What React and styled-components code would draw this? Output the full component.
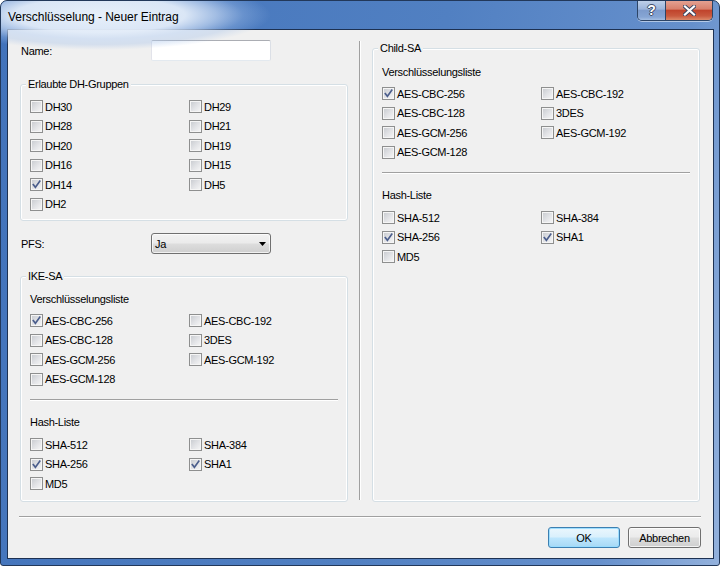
import React from 'react';
import styled, { createGlobalStyle } from 'styled-components';

const Global = createGlobalStyle`
  html, body { margin: 0; padding: 0; background: #ffffff; }
  body {
    width: 720px; height: 566px; overflow: hidden;
    font-family: "Liberation Sans", Arial, sans-serif;
  }
  * { box-sizing: border-box; }
`;

const Window = styled.div`
  width: 720px;
  height: 566px;
  display: flex;
  flex-direction: column;
  border: 1px solid #22385a;
  border-radius: 7px 7px 3px 3px;
  background: linear-gradient(100deg, #4273bb 0%, #5180c2 55%, #6690cc 85%, #93b1dc 100%);
  padding: 0 5px 6px 6px;
  overflow: hidden;
`;

const TitleBar = styled.div`
  height: 28px;
  flex: none;
  display: flex;
  align-items: flex-start;
  justify-content: space-between;
`;

const Title = styled.span`
  position: relative;
  isolation: isolate;
  margin: 9px 0 0 1px;
  font-size: 12px;
  line-height: 14px;
  color: #000;
  letter-spacing: -0.05px;
  &::before {
    content: "";
    position: absolute;
    z-index: -1;
    left: -80px; right: -130px; top: -30px; bottom: -26px;
    background: radial-gradient(closest-side ellipse at 45% 50%,
      rgba(234,242,251,0.98) 0%, rgba(226,236,249,0.95) 50%,
      rgba(200,218,243,0.7) 68%, rgba(160,190,232,0.35) 84%, rgba(140,175,225,0) 100%);
  }
`;

const CaptionButtons = styled.div`
  display: flex;
  margin-right: 1px;
  margin-top: -1px;
  border: 1px solid #2c4466;
  border-top: none;
  border-radius: 0 0 5px 5px;
  overflow: hidden;
  box-shadow: 0 1px 0 rgba(255,255,255,0.5);
`;

const CaptionButton = styled.div`
  width: ${p => p.$w}px;
  height: 20px;
  display: flex;
  align-items: center;
  justify-content: center;
  background: ${p => p.$close
    ? 'linear-gradient(180deg, #e5a596 0%, #d8806c 45%, #c0442c 52%, #c95a3f 80%, #dc8a6a 100%)'
    : 'linear-gradient(180deg, #c2d3ea 0%, #9cb5dc 45%, #7d9bcc 52%, #86a5d4 85%, #a5bfe3 100%)'};
  & + & { border-left: 1px solid #2c4466; }
  font-family: "Liberation Sans", Arial, sans-serif;
  font-weight: bold;
  font-size: 14px;
  color: #fff;
  text-shadow: 0 0 1px #2a3550, 1px 0 0 #45526e, -1px 0 0 #45526e, 0 1px 0 #45526e, 0 -1px 0 #45526e;
`;

const Client = styled.div`
  flex: 1;
  display: flex;
  flex-direction: column;
  border: 1px solid #1d3152;
  background: #f0f0f0;
  padding: 10px 12px 9px 12px;
  font-size: 11px;
  letter-spacing: -0.3px;
  color: #000;
`;

const Main = styled.div`
  display: grid;
  grid-template-columns: 328px 24px 328px;
  height: 462px;
`;

const Column = styled.div`
  display: flex;
  flex-direction: column;
  padding-top: ${p => p.$top || 0}px;
`;

const VSeparator = styled.div`
  width: 2px;
  margin: 1px 0 2px 11px;
  border-left: 1px solid #a0a0a0;
  border-right: 1px solid #ffffff;
`;

const FieldRow = styled.div`
  display: flex;
  align-items: center;
  height: ${p => p.$h}px;
  margin-top: ${p => p.$mt || 0}px;
`;

const FieldLabel = styled.span`
  width: 131px;
  padding-left: 1px;
`;

const TextInput = styled.div`
  width: 120px;
  height: 21px;
  background: #fff;
  border: 1px solid #e3e9ef;
  border-top-color: #abadb3;
  border-left-color: #e2e3ea;
  border-right-color: #dbdfe6;
  border-radius: 2px;
`;

const Select = styled.div`
  width: 120px;
  height: 21px;
  display: flex;
  align-items: center;
  justify-content: space-between;
  padding: 0 4px 0 3px;
  border: 1px solid #707070;
  border-radius: 3px;
  background: linear-gradient(180deg, #f2f2f2 0%, #ebebeb 48%, #dddddd 52%, #cfcfcf 100%);
  box-shadow: inset 0 0 0 1px rgba(255,255,255,0.7);
`;

const Group = styled.fieldset`
  margin: ${p => p.$mt || 0}px 0 0 0;
  padding: 0;
  min-width: 0;
  border: 1px solid #d5dfe5;
  border-radius: 3px;
  box-shadow: inset 0 0 0 1px #ffffff;
  flex: ${p => (p.$grow ? 1 : 'none')};
`;

const Legend = styled.legend`
  margin-left: 5px;
  padding: 0 2px;
  line-height: 14px;
  background: #f0f0f0;
`;

const GroupBody = styled.div`
  padding: ${p => p.$pt}px 9px ${p => p.$pb}px 9px;
  display: flex;
  flex-direction: column;
`;

const SubHeading = styled.div`
  line-height: 14px;
  height: 14px;
  margin-bottom: ${p => p.$mb || 5}px;
`;

const CheckGrid = styled.div`
  display: grid;
  grid-template-columns: 159px 1fr;
  grid-auto-rows: 19.5px;
`;

const CheckItem = styled.label`
  display: flex;
  align-items: center;
  gap: 2px;
  white-space: nowrap;
`;

const Box = styled.span`
  width: 13px;
  height: 13px;
  flex: none;
  display: flex;
  align-items: center;
  justify-content: center;
  border: 1px solid #8e8f8f;
  background: linear-gradient(135deg, #c6c9ce 0%, #e3e4e7 55%, #f7f7f7 100%);
  box-shadow: inset 0 0 0 1px #f5f5f5;
`;

const Divider = styled.div`
  height: 2px;
  margin: 10px 0 14px 0;
  border-top: 1px solid #a0a0a0;
  border-bottom: 1px solid #ffffff;
`;

const HSeparator = styled.div`
  height: 2px;
  margin: 14px 0 9px -1px;
  border-top: 1px solid #a0a0a0;
  border-bottom: 1px solid #ffffff;
`;

const ButtonRow = styled.div`
  display: flex;
  justify-content: flex-end;
  gap: 8px;
`;

const Button = styled.div`
  width: ${p => p.$w}px;
  height: 21px;
  display: flex;
  align-items: center;
  justify-content: center;
  border-radius: 3px;
  border: 1px solid ${p => (p.$default ? '#3c7fb1' : '#707070')};
  background: ${p => (p.$default
    ? 'linear-gradient(180deg, #eaf6fd 0%, #d9f0fc 48%, #bee6fd 52%, #a7d9f5 100%)'
    : 'linear-gradient(180deg, #f2f2f2 0%, #ebebeb 48%, #dddddd 52%, #cfcfcf 100%)')};
  box-shadow: inset 0 0 0 1px ${p => (p.$default ? 'rgba(150,220,255,0.9)' : 'rgba(255,255,255,0.75)')};
`;

const Check = ({ on }) => (
  <Box>
    {on ? (
      <svg width="9" height="9" viewBox="0 0 9 9">
        <path d="M1.3 4.6 L3.4 7.3 L7.8 1.2" fill="none" stroke="#4b5e8c" strokeWidth="1.6" strokeLinecap="square" />
      </svg>
    ) : null}
  </Box>
);

const Checks = ({ items }) => (
  <CheckGrid>
    {items.map(([label, on]) => (
      <CheckItem key={label}>
        <Check on={on === 1} />
        <span>{label}</span>
      </CheckItem>
    ))}
  </CheckGrid>
);

const dh = [
  ['DH30', 0], ['DH29', 0], ['DH28', 0], ['DH21', 0], ['DH20', 0], ['DH19', 0],
  ['DH16', 0], ['DH15', 0], ['DH14', 1], ['DH5', 0], ['DH2', 0],
];
const enc = [
  ['AES-CBC-256', 1], ['AES-CBC-192', 0], ['AES-CBC-128', 0], ['3DES', 0],
  ['AES-GCM-256', 0], ['AES-GCM-192', 0], ['AES-GCM-128', 0],
];
const hash = [['SHA-512', 0], ['SHA-384', 0], ['SHA-256', 1], ['SHA1', 1], ['MD5', 0]];

const SaBody = ({ pt, pb }) => (
  <GroupBody $pt={pt} $pb={pb}>
    <SubHeading>Verschlüsselungsliste</SubHeading>
    <Checks items={enc} />
    <Divider />
    <SubHeading $mb={6}>Hash-Liste</SubHeading>
    <Checks items={hash} />
  </GroupBody>
);

export default function App() {
  return (
    <>
      <Global />
      <Window>
        <TitleBar>
          <Title>Verschlüsselung - Neuer Eintrag</Title>
          <CaptionButtons>
            <CaptionButton $w={27}>?</CaptionButton>
            <CaptionButton $w={47} $close>
              <svg width="13" height="11" viewBox="0 0 13 11">
                <path d="M2 1.5 L11 9.5 M11 1.5 L2 9.5" stroke="#3b4560" strokeWidth="4" strokeLinecap="square" />
                <path d="M2 1.5 L11 9.5 M11 1.5 L2 9.5" stroke="#ffffff" strokeWidth="2.2" strokeLinecap="square" />
              </svg>
            </CaptionButton>
          </CaptionButtons>
        </TitleBar>
        <Client>
          <Main>
            <Column>
              <FieldRow $h={21}>
                <FieldLabel>Name:</FieldLabel>
                <TextInput />
              </FieldRow>
              <Group $mt={16}>
                <Legend>Erlaubte DH-Gruppen</Legend>
                <GroupBody $pt={6} $pb={6}>
                  <Checks items={dh} />
                </GroupBody>
              </Group>
              <FieldRow $h={21} $mt={12}>
                <FieldLabel>PFS:</FieldLabel>
                <Select>
                  <span>Ja</span>
                  <svg width="7" height="4" viewBox="0 0 7 4">
                    <path d="M0 0 H7 L3.5 4 Z" fill="#000" />
                  </svg>
                </Select>
              </FieldRow>
              <Group $mt={15} $grow>
                <Legend>IKE-SA</Legend>
                <SaBody pt={9} pb={6} />
              </Group>
            </Column>
            <VSeparator />
            <Column $top={1}>
              <Group $grow>
                <Legend>Child-SA</Legend>
                <SaBody pt={10} pb={6} />
              </Group>
            </Column>
          </Main>
          <HSeparator />
          <ButtonRow>
            <Button $w={72} $default>OK</Button>
            <Button $w={73}>Abbrechen</Button>
          </ButtonRow>
        </Client>
      </Window>
    </>
  );
}
